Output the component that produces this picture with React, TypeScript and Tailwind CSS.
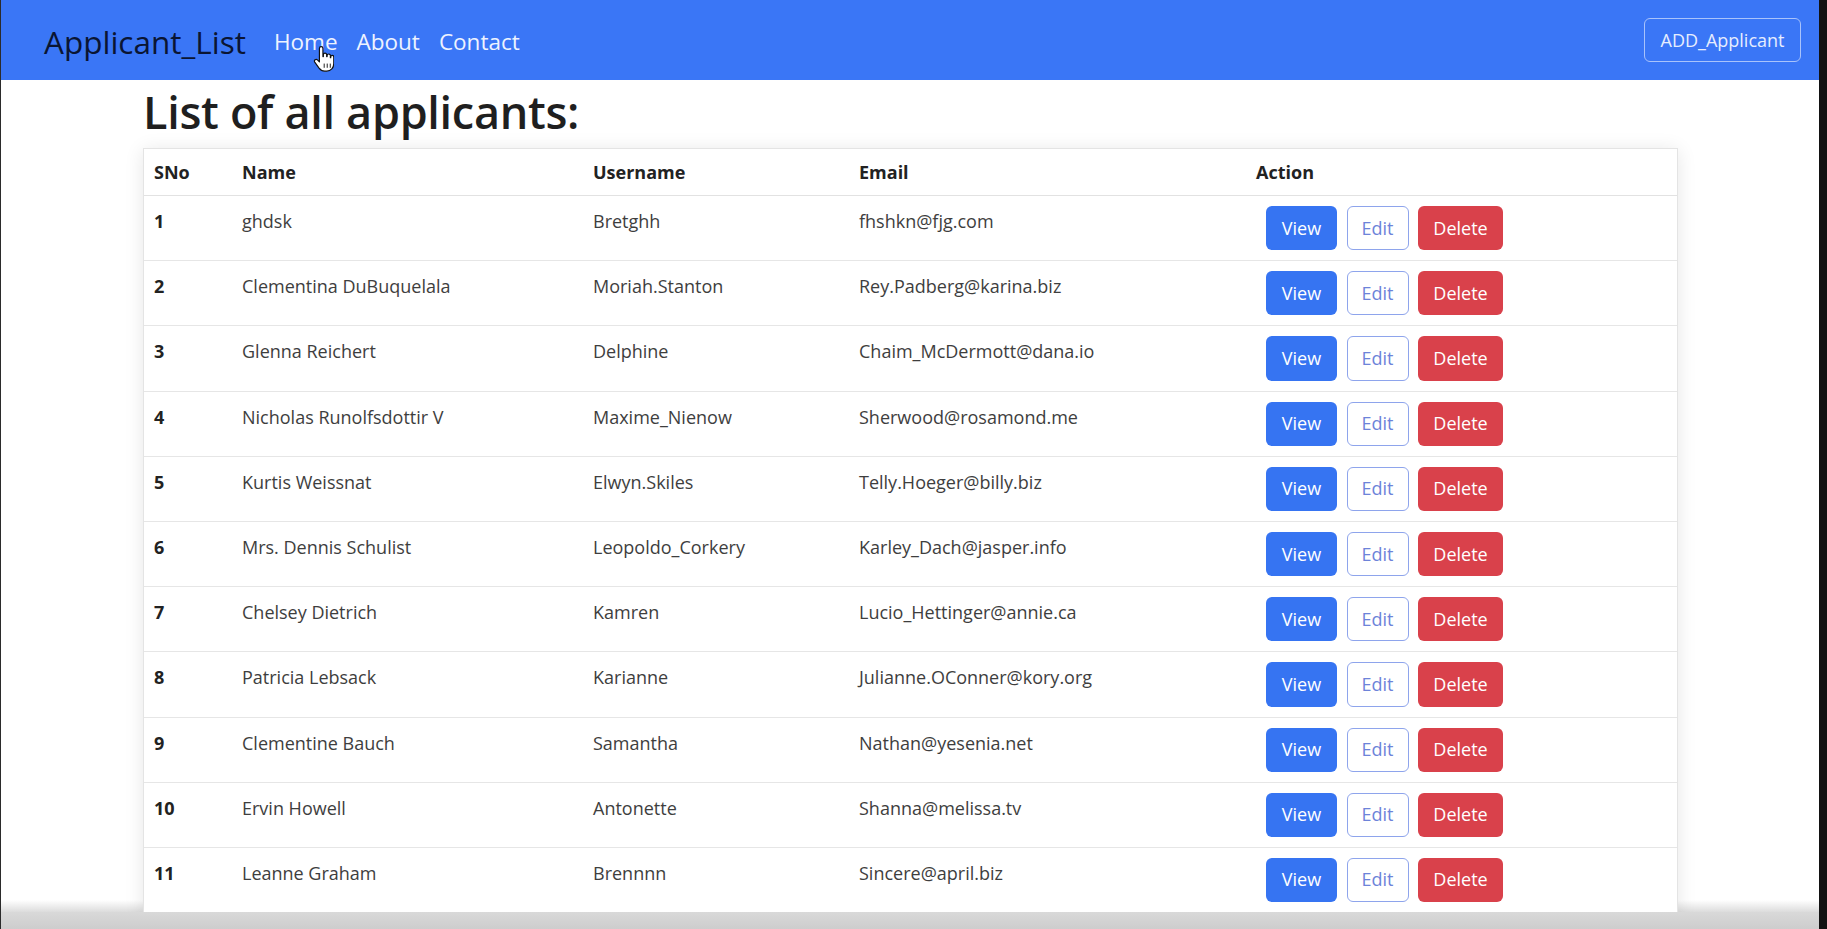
import React from "react";

const rows: [number, string, string, string][] = [
  [1, "ghdsk", "Bretghh", "fhshkn@fjg.com"],
  [2, "Clementina DuBuquelala", "Moriah.Stanton", "Rey.Padberg@karina.biz"],
  [3, "Glenna Reichert", "Delphine", "Chaim_McDermott@dana.io"],
  [4, "Nicholas Runolfsdottir V", "Maxime_Nienow", "Sherwood@rosamond.me"],
  [5, "Kurtis Weissnat", "Elwyn.Skiles", "Telly.Hoeger@billy.biz"],
  [6, "Mrs. Dennis Schulist", "Leopoldo_Corkery", "Karley_Dach@jasper.info"],
  [7, "Chelsey Dietrich", "Kamren", "Lucio_Hettinger@annie.ca"],
  [8, "Patricia Lebsack", "Karianne", "Julianne.OConner@kory.org"],
  [9, "Clementine Bauch", "Samantha", "Nathan@yesenia.net"],
  [10, "Ervin Howell", "Antonette", "Shanna@melissa.tv"],
  [11, "Leanne Graham", "Brennnn", "Sincere@april.biz"],
];

function HandCursor() {
  return (
    <svg
      className="absolute left-[312px] top-[46px] z-30 h-[27px] w-[21px]"
      viewBox="0 0 18 23"
      aria-hidden
    >
      <path
        d="M5.5 2a1.5 1.5 0 0 1 3 0v7h.4V7.4a1.4 1.4 0 0 1 2.8 0V9h.4V8.2a1.4 1.4 0 0 1 2.8 0V10h.3V9.3a1.3 1.3 0 0 1 2.6 0V15c0 3.6-2.4 6.5-6 6.5H10c-2.3 0-3.6-1-4.8-2.6L1.5 13.7a1.5 1.5 0 0 1 2.3-1.9L5.5 13.6z"
        fill="#ffffff"
        stroke="#111111"
        strokeWidth="1"
        strokeLinejoin="round"
      />
      <path d="M9.6 15v3.6M12.2 15v3.6M14.8 15v3.6" stroke="#111111" strokeWidth="0.8" />
    </svg>
  );
}

export default function App() {
  return (
    <div className="flex h-[929px] w-[1827px] overflow-hidden bg-white font-['Open_Sans',sans-serif]">
      <div className="w-px shrink-0 bg-[#2b2b2b]" />
      <div className="relative flex w-[1818px] shrink-0 flex-col">
        <nav className="relative flex h-[80px] shrink-0 items-center bg-[#3a76f6] pl-[43px] pr-[18px]">
          <a className="mt-[4px] text-[31.5px] leading-none text-[#0a1533]">Applicant_List</a>
          <ul className="mt-[4px] ml-[28px] flex gap-[19px] text-[22.5px] leading-none text-[#eef3ff]">
            <li>Home</li>
            <li>About</li>
            <li>Contact</li>
          </ul>
          <button className="ml-auto h-[44px] w-[157px] rounded-[6px] border border-[#a9c3fb] text-[18px] text-[#e6edfe]">
            ADD_Applicant
          </button>
          <HandCursor />
        </nav>
        <main className="relative flex-1 overflow-hidden pl-[142px]">
          <h1 className="mt-[8px] mb-[12px] text-[45px] font-semibold leading-[48px] tracking-[-0.3px] text-[#1f1f1f]">
            List of all applicants:
          </h1>
          <div className="relative z-10 w-[1535px] border border-[#e4e4e4] bg-white shadow-[0_2px_18px_rgba(0,0,0,0.10)]">
            <table className="w-full table-fixed border-separate border-spacing-0 text-[18px] leading-[27px]">
              <colgroup>
                <col className="w-[87px]" />
                <col className="w-[351px]" />
                <col className="w-[266px]" />
                <col className="w-[397px]" />
                <col />
              </colgroup>
              <thead>
                <tr className="text-left font-bold text-[#222222]">
                  <th className="h-[47px] border-b border-[#e2e2e2] pl-[10px] pt-[10px] pb-[9px] align-top font-bold">SNo</th>
                  <th className="border-b border-[#e2e2e2] pl-[11px] pt-[10px] align-top font-bold">Name</th>
                  <th className="border-b border-[#e2e2e2] pl-[11px] pt-[10px] align-top font-bold">Username</th>
                  <th className="border-b border-[#e2e2e2] pl-[11px] pt-[10px] align-top font-bold">Email</th>
                  <th className="border-b border-[#e2e2e2] pl-[11px] pt-[10px] align-top font-bold">Action</th>
                </tr>
              </thead>
              <tbody>
                {rows.map(([n, name, user, email]) => (
                  <tr key={n} className="text-[#3e3e3e]">
                    <td className="border-b border-[#e6e6e6] pl-[10px] pt-[12px] align-top font-bold text-[#222222]">{n}</td>
                    <td className="border-b border-[#e6e6e6] pl-[11px] pt-[12px] align-top">{name}</td>
                    <td className="border-b border-[#e6e6e6] pl-[11px] pt-[12px] align-top">{user}</td>
                    <td className="border-b border-[#e6e6e6] pl-[11px] pt-[12px] align-top">{email}</td>
                    <td className="border-b border-[#e6e6e6] py-[10px] pl-[21px] align-top">
                      <div className="flex gap-[9.5px]">
                        <button className="h-[44.2px] w-[71px] rounded-[6px] bg-[#3674f2] text-[18px] text-white">View</button>
                        <button className="h-[44.2px] w-[62px] rounded-[6px] border border-[#8ea4ec] bg-white text-[18px] text-[#6d83d9]">Edit</button>
                        <button className="h-[44.2px] w-[85px] rounded-[6px] bg-[#d9414b] text-[18px] text-white">Delete</button>
                      </div>
                    </td>
                  </tr>
                ))}
              </tbody>
            </table>
          </div>
          <div className="absolute bottom-[17px] left-0 right-0 z-0 h-[12px] bg-gradient-to-b from-transparent to-[#dcdcdc]" />
          <div className="absolute bottom-0 left-0 right-0 z-20 h-[17px] bg-gradient-to-b from-[#d9d9d9] to-[#cdcdcd]" />
        </main>
      </div>
      <div className="w-[8px] shrink-0 bg-[#121212]" />
    </div>
  );
}
